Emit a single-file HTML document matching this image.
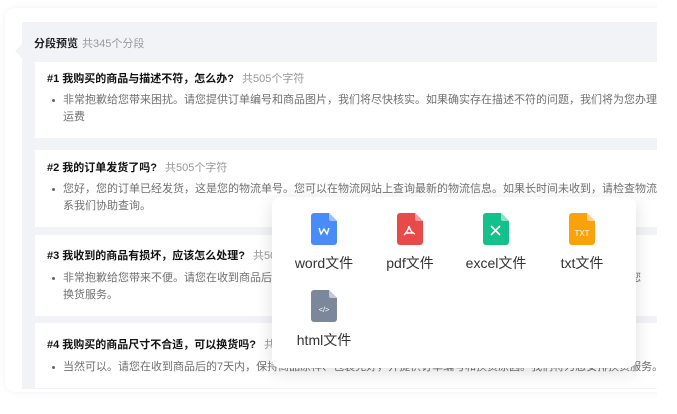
<!DOCTYPE html>
<html><head><meta charset="utf-8"><style>
*{margin:0;padding:0;box-sizing:border-box}
body{width:677px;height:414px;background:#fff;position:relative;overflow:hidden;font-family:"Liberation Sans","Noto Sans CJK SC",sans-serif}
.clip{position:absolute;left:0;top:0;width:657px;height:414px;overflow:hidden}
.outer{position:absolute;left:5px;top:8px;width:700px;height:384px;background:#fff;border-radius:10px;box-shadow:0 0 8px rgba(0,0,0,.06)}
.panel{position:absolute;left:22px;top:22px;width:700px;height:367px;background:#f2f3f7}
.arrow{position:absolute;left:15px;top:44px;width:0;height:0;border-top:7px solid transparent;border-bottom:7px solid transparent;border-right:7px solid #f2f3f7}
.ttl{position:absolute;left:34px;top:35px;font-size:11px;color:#222;font-weight:bold}
.ttl span{color:#999;font-weight:normal;margin-left:4px}
.card{position:absolute;left:35px;width:700px;background:#fff}
.card h4{position:absolute;left:12px;font-size:11px;color:#111;font-weight:bold;white-space:nowrap}
.card h4 span{color:#999;font-weight:normal;margin-left:8px}
.card p{position:absolute;left:28px;width:620px;font-size:11px;color:#707070;line-height:17px;white-space:nowrap}
.card p:before{content:"";position:absolute;left:-11px;top:7px;width:3px;height:3px;border-radius:50%;background:#666}
.pop{position:absolute;left:272px;top:197px;width:364px;height:171px;background:#fff;border-radius:8px;box-shadow:0 4px 18px rgba(0,0,0,.13)}
.it{position:absolute;width:90px;text-align:center;font-size:14px;color:#333}
.it svg{display:block;margin:0 auto 8px}
</style></head><body>
<div class="clip">
<div class="outer"></div>
<div class="panel"></div>
<div class="arrow"></div>
<div class="ttl">分段预览<span>共345个分段</span></div>
<div class="card" style="top:62px;height:76px"><h4 style="top:8px">#1 我购买的商品与描述不符，怎么办?<span>共505个字符</span></h4><p style="top:30px">非常抱歉给您带来困扰。请您提供订单编号和商品图片，我们将尽快核实。如果确实存在描述不符的问题，我们将为您办理退货<br>运费</p></div>
<div class="card" style="top:150px;height:77px"><h4 style="top:9px">#2 我的订单发货了吗?<span>共505个字符</span></h4><p style="top:31px">您好，您的订单已经发货，这是您的物流单号。您可以在物流网站上查询最新的物流信息。如果长时间未收到，请检查物流信息<br>系我们协助查询。</p></div>
<div class="card" style="top:235px;height:81px"><h4 style="top:12px">#3 我收到的商品有损坏，应该怎么处理?<span>共505个字符</span></h4><p style="top:35px">非常抱歉给您带来不便。请您在收到商品后的7天内联系我们，并提供商品损坏的照片，我们将尽快为您处理退货或为您<br>换货服务。</p></div>
<div class="card" style="top:323px;height:65px"><h4 style="top:13px">#4 我购买的商品尺寸不合适，可以换货吗?<span>共505个字符</span></h4><p style="top:36px">当然可以。请您在收到商品后的7天内，保持商品原样、包装完好，并提供订单编号和换货原因。我们将为您安排换货服务。</p></div>
</div>
<div class="pop">
<div class="it" style="left:7px;top:16px"><svg width="26" height="32" viewBox="0 0 26 32"><path d="M3 0h15l8 8v21a3 3 0 0 1-3 3H3a3 3 0 0 1-3-3V3a3 3 0 0 1 3-3z" fill="#4a8cf7"/><path d="M18 0l8 8h-6a2 2 0 0 1-2-2z" fill="#9cc0fb"/><path d="M8 15l2 6 3-5 3 5 2-6" fill="none" stroke="#fff" stroke-width="1.4"/></svg>word文件</div>
<div class="it" style="left:93px;top:16px"><svg width="26" height="32" viewBox="0 0 26 32"><path d="M3 0h15l8 8v21a3 3 0 0 1-3 3H3a3 3 0 0 1-3-3V3a3 3 0 0 1 3-3z" fill="#e84a4a"/><path d="M18 0l8 8h-6a2 2 0 0 1-2-2z" fill="#f39c9c"/><path d="M12 13c1 4 3 7 6 8M12 13c-1 4-2 6-5 9M8 20h9" fill="none" stroke="#fff" stroke-width="1.4"/></svg>pdf文件</div>
<div class="it" style="left:179px;top:16px"><svg width="26" height="32" viewBox="0 0 26 32"><path d="M3 0h15l8 8v21a3 3 0 0 1-3 3H3a3 3 0 0 1-3-3V3a3 3 0 0 1 3-3z" fill="#14c08c"/><path d="M18 0l8 8h-6a2 2 0 0 1-2-2z" fill="#8de0c6"/><path d="M8 13l9 9M17 13l-9 9" stroke="#fff" stroke-width="1.6"/></svg>excel文件</div>
<div class="it" style="left:265px;top:16px"><svg width="26" height="32" viewBox="0 0 26 32"><path d="M3 0h15l8 8v21a3 3 0 0 1-3 3H3a3 3 0 0 1-3-3V3a3 3 0 0 1 3-3z" fill="#f9a20c"/><path d="M18 0l8 8h-6a2 2 0 0 1-2-2z" fill="#fcd18a"/><text x="13" y="23" text-anchor="middle" font-size="8" fill="#fff" font-family="Liberation Sans">TXT</text></svg>txt文件</div>
<div class="it" style="left:7px;top:93px"><svg width="26" height="32" viewBox="0 0 26 32"><path d="M3 0h15l8 8v21a3 3 0 0 1-3 3H3a3 3 0 0 1-3-3V3a3 3 0 0 1 3-3z" fill="#7c879c"/><path d="M18 0l8 8h-6a2 2 0 0 1-2-2z" fill="#c3c8d2"/><text x="13" y="22" text-anchor="middle" font-size="7.5" fill="#fff" font-family="Liberation Sans">&lt;/&gt;</text></svg>html文件</div>
</div>
</body></html>
